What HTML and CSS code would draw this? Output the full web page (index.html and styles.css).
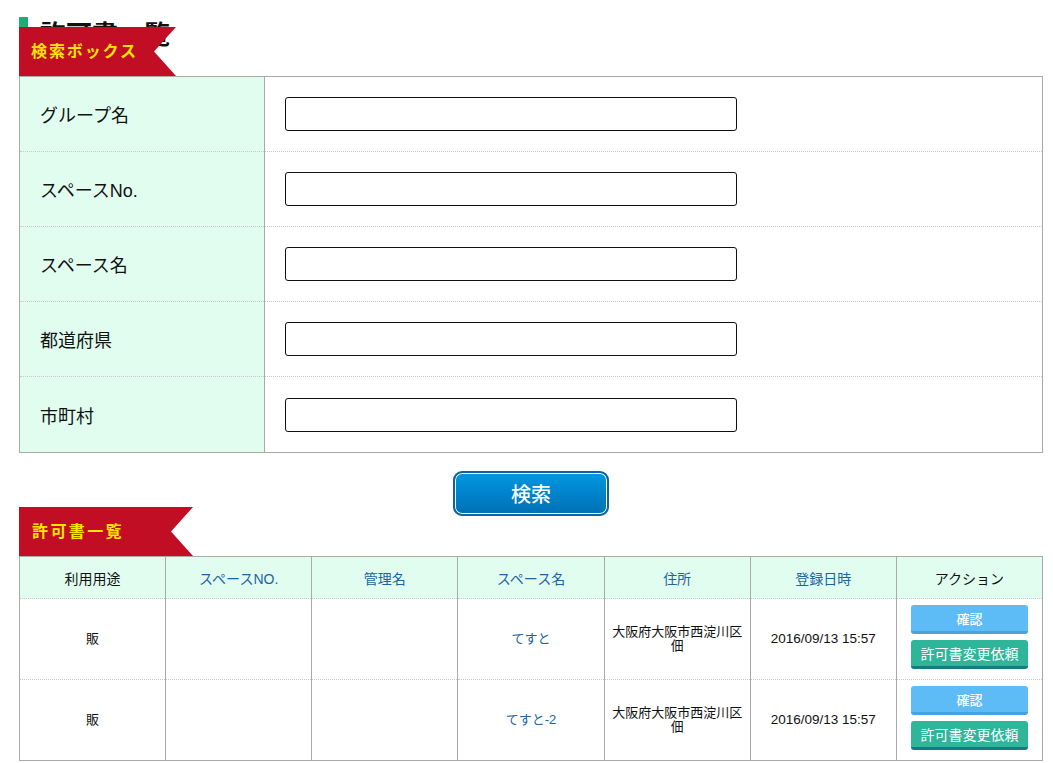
FILE: index.html
```html
<!DOCTYPE html>
<html lang="ja">
<head>
<meta charset="utf-8">
<title>許可書一覧</title>
<link rel="stylesheet" href="styles.css">
</head>
<body>
<div class="page">
  <h1 class="page-title">許可書一覧</h1>

  <div class="ribbon ribbon-search">検索ボックス</div>
  <table class="search-table">
    <tr><th>グループ名</th><td><input class="text-input" type="text"></td></tr>
    <tr><th>スペースNo.</th><td><input class="text-input" type="text"></td></tr>
    <tr><th>スペース名</th><td><input class="text-input" type="text"></td></tr>
    <tr><th>都道府県</th><td><input class="text-input" type="text"></td></tr>
    <tr class="last"><th>市町村</th><td><input class="text-input" type="text"></td></tr>
  </table>

  <div class="search-actions">
    <button class="search-btn" type="button">検索</button>
  </div>

  <div class="ribbon ribbon-list">許可書一覧</div>
  <table class="list-table">
    <thead>
      <tr>
        <th class="plain">利用用途</th>
        <th>スペースNO.</th>
        <th>管理名</th>
        <th>スペース名</th>
        <th>住所</th>
        <th>登録日時</th>
        <th class="plain">アクション</th>
      </tr>
    </thead>
    <tbody>
      <tr>
        <td>販</td>
        <td></td>
        <td></td>
        <td class="link">てすと</td>
        <td class="addr">大阪府大阪市西淀川区佃</td>
        <td class="date">2016/09/13 15:57</td>
        <td class="actions">
          <button class="btn btn-confirm" type="button">確認</button>
          <button class="btn btn-change" type="button">許可書変更依頼</button>
        </td>
      </tr>
      <tr>
        <td>販</td>
        <td></td>
        <td></td>
        <td class="link">てすと-2</td>
        <td class="addr">大阪府大阪市西淀川区佃</td>
        <td class="date">2016/09/13 15:57</td>
        <td class="actions">
          <button class="btn btn-confirm" type="button">確認</button>
          <button class="btn btn-change" type="button">許可書変更依頼</button>
        </td>
      </tr>
    </tbody>
  </table>
</div>
</body>
</html>
```

FILE: styles.css
```css
* { box-sizing: border-box; }

html, body {
  margin: 0;
  padding: 0;
  background: #fff;
}

body {
  font-family: "Liberation Sans", "Noto Sans CJK JP", sans-serif;
  color: #111;
}

.page {
  width: 1024px;
  margin-left: 19px;
  padding-top: 17px;
}

.page-title {
  margin: 0;
  height: 36px;
  line-height: 36px;
  font-size: 26px;
  font-weight: bold;
  border-left: 9px solid #1fae72;
  padding-left: 12px;
  color: #111;
}

.ribbon {
  position: relative;
  height: 49px;
  line-height: 49px;
  padding-left: 12px;
  background: #c20e24;
  color: #ffe600;
  font-size: 16px;
  font-weight: bold;
  letter-spacing: 1.9px;
  clip-path: polygon(0 0, 100% 0, calc(100% - 22px) 50%, 100% 100%, 0 100%);
}

.ribbon-search {
  width: 157px;
  margin-top: -26px;
}

.ribbon-list {
  width: 174px;
  letter-spacing: 2.4px;
  padding-left: 13px;
}

/* Search table */
.search-table {
  width: 100%;
  border-collapse: collapse;
  border: 1px solid #aaa;
}

.search-table th,
.search-table td {
  height: 75px;
  border-top: 1px dotted #c8c8c8;
  vertical-align: middle;
}

.search-table tr.last th,
.search-table tr.last td {
  height: 76px;
}

.search-table tr:first-child th,
.search-table tr:first-child td {
  border-top: none;
}

.search-table th {
  width: 245px;
  background: #e1fdf0;
  border-right: 1px solid #aaa;
  text-align: left;
  font-weight: normal;
  font-size: 18px;
  padding-left: 20px;
  color: #111;
}

.search-table td {
  padding-left: 20px;
}

.text-input {
  display: block;
  width: 452px;
  height: 34px;
  border: 1px solid #111;
  border-radius: 3px;
  background: #fff;
  font-size: 16px;
  padding: 0 8px;
}

/* Search button */
.search-actions {
  display: flex;
  justify-content: center;
  padding-top: 18px;
  height: 54px;
}

.search-btn {
  width: 156px;
  height: 45px;
  flex: none;
  border: 2px solid #0b65a0;
  border-radius: 9px;
  box-shadow: inset 0 0 0 1px #fff;
  background: linear-gradient(#0197e2, #0070b4);
  color: #fff;
  font-family: "Noto Sans CJK JP", sans-serif;
  font-size: 20px;
  font-weight: 500;
  padding: 0;
  position: relative;
  z-index: 1;
}

/* List table */
.list-table {
  width: 100%;
  table-layout: fixed;
  border-collapse: collapse;
  border: 1px solid #aaa;
  font-size: 13px;
}

.list-table th,
.list-table td {
  border-left: 1px solid #aaa;
  border-bottom: 1px dotted #c8c8c8;
  text-align: center;
  vertical-align: middle;
  padding: 0 6px;
}

.list-table th {
  height: 42px;
  background: #e1fdf0;
  font-weight: normal;
  font-size: 14px;
  color: #1a65a3;
}

.list-table th.plain {
  color: #111;
}

.list-table td {
  height: 81px;
  color: #111;
  line-height: 14px;
}

.list-table td.link {
  color: #1a65a3;
}

.list-table td.addr {
  word-break: break-all;
}

.list-table td.date {
  font-size: 13.5px;
}

.list-table td.actions {
  padding: 0 0 4px;
}

.btn {
  display: block;
  width: 117px;
  margin: 0 auto;
  border: none;
  border-radius: 3px;
  color: #fff;
  font-family: "Noto Sans CJK JP", sans-serif;
  padding: 0;
}

.btn-confirm {
  height: 29px;
  background: #5dbcf6;
  border-bottom: 3px solid #48a2dc;
  font-size: 13px;
  font-weight: 500;
}

.btn-change {
  height: 29px;
  margin-top: 6px;
  background: #2fb59a;
  border-bottom: 3px solid #177a80;
  font-size: 14px;
}
```
